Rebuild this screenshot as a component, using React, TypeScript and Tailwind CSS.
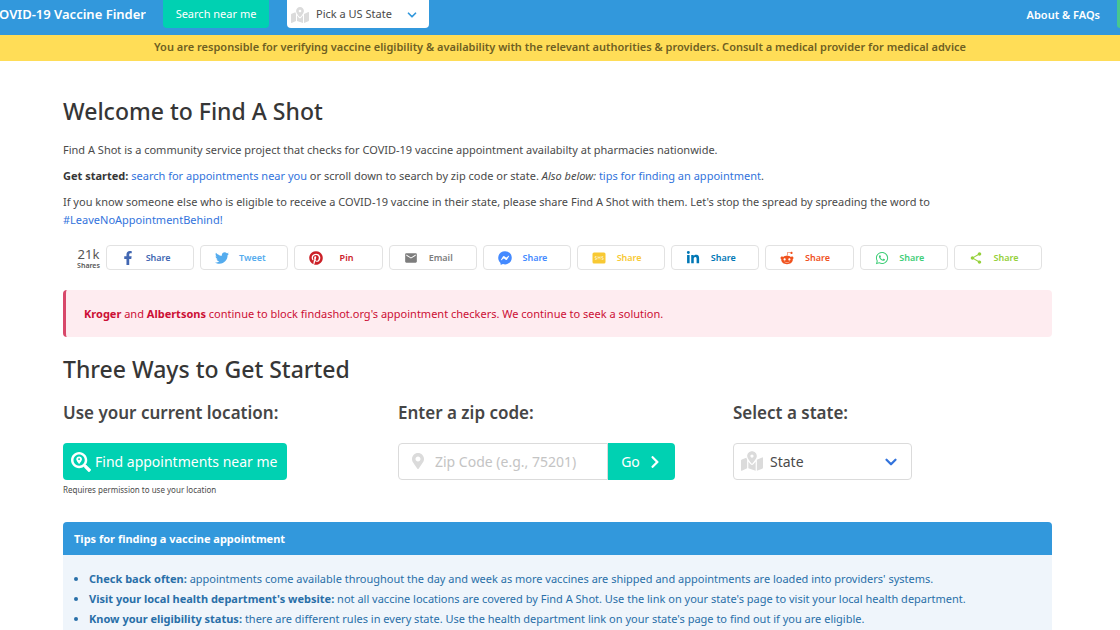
import type { ReactNode } from "react";
import type { IconType } from "react-icons";
import {
   FaChevronRight,
   FaFacebookF,
   FaFacebookMessenger,
   FaLinkedinIn,
   FaMapMarkedAlt,
   FaMapMarkerAlt,
   FaPinterest,
   FaRedditAlien,
   FaSearchLocation,
   FaTwitter,
   FaWhatsapp,
} from "react-icons/fa";
import { MdEmail, MdShare } from "react-icons/md";
import { FiChevronDown } from "react-icons/fi";

type ShareItem = { name: string; label: string; icon: IconType; color: string };

function SmsIcon({ className }: { className?: string }) {
   return (
      <svg viewBox="0 0 14 14" fill="currentColor" className={className}>
         <path d="M2 1.5h10a1.5 1.5 0 0 1 1.5 1.5v8a1.5 1.5 0 0 1-1.5 1.5H2A1.5 1.5 0 0 1 .5 11V3A1.5 1.5 0 0 1 2 1.5z" />
         <path
            d="M4.5 5.6H3V7h1.4v1.4H2.8M6 8.4V5.6l1 1.3 1-1.3v2.8M11.2 5.6H9.7V7h1.4v1.4H9.5"
            fill="none"
            stroke="#fff"
            strokeWidth=".7"
            strokeOpacity=".8"
         />
      </svg>
   );
}

const shares: ShareItem[] = [
   { name: "facebook", label: "Share", icon: FaFacebookF, color: "text-[#4267b2]" },
   { name: "twitter", label: "Tweet", icon: FaTwitter, color: "text-[#55acee]" },
   { name: "pinterest", label: "Pin", icon: FaPinterest, color: "text-[#cb2027]" },
   { name: "email", label: "Email", icon: MdEmail, color: "text-[#7d7d7d]" },
   { name: "messenger", label: "Share", icon: FaFacebookMessenger, color: "text-[#448aff]" },
   { name: "sms", label: "Share", icon: SmsIcon, color: "text-[#f8c933]" },
   { name: "linkedin", label: "Share", icon: FaLinkedinIn, color: "text-[#0077b5]" },
   { name: "reddit", label: "Share", icon: FaRedditAlien, color: "text-[#f0521e]" },
   { name: "whatsapp", label: "Share", icon: FaWhatsapp, color: "text-[#3fce78]" },
   { name: "sharethis", label: "Share", icon: MdShare, color: "text-[#95d03a]" },
];

const tips = [
   {
      title: "Check back often:",
      text: "appointments come available throughout the day and week as more vaccines are shipped and appointments are loaded into providers' systems.",
   },
   {
      title: "Visit your local health department's website:",
      text: "not all vaccine locations are covered by Find A Shot. Use the link on your state's page to visit your local health department.",
   },
   {
      title: "Know your eligibility status:",
      text: "there are different rules in every state. Use the health department link on your state's page to find out if you are eligible.",
   },
];

function Navbar() {
   return (
      <nav className="flex h-[35px] items-start bg-[#3298dc] text-white">
         <a href="#home" className="flex h-[30px] w-[146px] items-center justify-end overflow-hidden text-[13px] font-semibold whitespace-nowrap">
            COVID-19 Vaccine Finder
         </a>
         <button type="button" className="ml-[17px] h-7 w-[106px] rounded-b-sm bg-[#00d1b2] text-[11px]">
            Search near me
         </button>
         <div className="relative ml-[18px] text-[#4a4a4a]">
            <select
               aria-label="Pick a US State"
               className="h-7 w-[142px] appearance-none rounded-b-sm bg-white pl-[29px] text-[11px]"
            >
               <option>Pick a US State</option>
            </select>
            <FaMapMarkedAlt className="pointer-events-none absolute top-1.5 left-1 size-[18px] text-[#dbdbdb]" />
            <FiChevronDown className="pointer-events-none absolute top-2 right-2.5 size-3.5 stroke-3 text-[#3298dc]" />
         </div>
         <a href="#about" className="mr-[17px] ml-auto flex h-[30px] items-center text-[11px] font-semibold">
            About &amp; FAQs
         </a>
         <button type="button" aria-label="Donate" className="h-7 w-[3px] rounded-bl-sm bg-[#48c78e]" />
      </nav>
   );
}

function ShareBar() {
   return (
      <div className="mt-4 mr-2.5 ml-3.5 flex items-center gap-1.5">
         <div className="flex w-[23px] flex-col items-center text-[#555555]">
            <span className="text-[13px] leading-4">21k</span>
            <span className="text-[7px] leading-2 font-semibold">Shares</span>
         </div>
         {shares.map(({ name, label, icon: Icon, color }) => (
            <button
               key={name}
               type="button"
               aria-label={`${label} ${name}`}
               className={`flex h-[25px] flex-1 items-center rounded-sm border border-[#e2e2e2] pl-3.5 ${color}`}
            >
               <Icon className="size-3.5 shrink-0" />
               <span className="flex-1 pr-3 text-[9px] font-semibold">{label}</span>
            </button>
         ))}
      </div>
   );
}

function Way({ title, htmlFor, children }: { title: string; htmlFor: string; children: ReactNode }) {
   return (
      <div>
         <h3 className="mb-[18px] text-[17px] leading-6 font-semibold text-[#464646]">
            <label htmlFor={htmlFor}>{title}</label>
         </h3>
         {children}
      </div>
   );
}

function App() {
   return (
      <div className="flex min-h-screen flex-col bg-white font-['Noto_Sans','Open_Sans',sans-serif] text-[11px] text-[#4a4a4a]">
         <Navbar />
         <div className="h-[26px] bg-[#ffdd57] text-center text-[11px] leading-6 font-semibold text-[#6e5f22]">
            You are responsible for verifying vaccine eligibility &amp; availability with the relevant authorities &amp;
            providers. Consult a medical provider for medical advice
         </div>

         <main className="flex flex-1 flex-col pt-[34px] pr-[68px] pl-[63px]">
            <h1 className="text-[23px] leading-8 font-medium text-[#363636]">Welcome to Find A Shot</h1>
            <div className="mt-[14px] flex flex-col gap-2 leading-[18px]">
               <p>
                  Find A Shot is a community service project that checks for COVID-19 vaccine appointment availabilty at
                  pharmacies nationwide.
               </p>
               <p>
                  <strong className="font-bold text-[#363636]">Get started:</strong>{" "}
                  <a href="#near" className="text-[#3273dc]">search for appointments near you</a> or scroll down to
                  search by zip code or state. <em>Also below:</em>{" "}
                  <a href="#tips" className="text-[#3273dc]">tips for finding an appointment</a>.
               </p>
               <p>
                  If you know someone else who is eligible to receive a COVID-19 vaccine in their state, please share
                  Find A Shot with them. Let's stop the spread by spreading the word to
                  <br />
                  <a href="#tag" className="text-[#3273dc]">#LeaveNoAppointmentBehind!</a>
               </p>
            </div>

            <ShareBar />

            <div className="mt-5 rounded-sm border-l-3 border-[#d8486a] bg-[#feecf0] px-[18px] py-[14px] leading-[19px] text-[#cc0f35]">
               <strong className="font-bold">Kroger</strong> and{" "}
               <strong className="font-bold">Albertsons</strong> continue to block findashot.org's appointment
               checkers. We continue to seek a solution.
            </div>

            <h2 className="mt-4 text-[23px] leading-8 font-medium text-[#363636]">Three Ways to Get Started</h2>
            <div className="mt-4 grid grid-cols-3 gap-4">
               <Way title="Use your current location:" htmlFor="near">
                  <button
                     id="near"
                     type="button"
                     className="flex h-[37px] w-56 items-center gap-1 rounded-sm bg-[#00d1b2] pl-2 text-sm whitespace-nowrap text-white"
                  >
                     <FaSearchLocation className="size-5" />
                     Find appointments near me
                  </button>
                  <p className="mt-1 text-[8px] leading-3">Requires permission to use your location</p>
               </Way>
               <Way title="Enter a zip code:" htmlFor="zip">
                  <div className="relative flex">
                     <input
                        id="zip"
                        type="text"
                        placeholder="Zip Code (e.g., 75201)"
                        className="h-[37px] w-[210px] rounded-l-sm border border-[#dbdbdb] pl-9 text-sm placeholder:text-[#c4c4c4]"
                     />
                     <FaMapMarkerAlt className="pointer-events-none absolute top-2.5 left-3 size-4 text-[#dbdbdb]" />
                     <button
                        type="button"
                        className="flex h-[37px] w-[67px] items-center justify-center gap-2 rounded-r-sm bg-[#00d1b2] text-sm text-white"
                     >
                        Go <FaChevronRight className="size-3.5" />
                     </button>
                  </div>
               </Way>
               <Way title="Select a state:" htmlFor="state">
                  <div className="relative w-[179px]">
                     <select
                        id="state"
                        className="h-[37px] w-full appearance-none rounded-sm border border-[#dbdbdb] bg-white pl-9 text-sm text-[#4a4a4a]"
                     >
                        <option>State</option>
                     </select>
                     <FaMapMarkedAlt className="pointer-events-none absolute top-[7px] left-2 size-[22px] text-[#dbdbdb]" />
                     <FiChevronDown className="pointer-events-none absolute top-2.5 right-3 size-[18px] stroke-3 text-[#3273dc]" />
                  </div>
               </Way>
            </div>

            <section id="tips" className="mt-[26px] flex flex-1 flex-col rounded-t-sm bg-[#eff5fb] text-[#296fa8]">
               <h4 className="h-[33px] rounded-t-sm bg-[#3298dc] px-[11px] leading-[33px] font-bold text-white">
                  Tips for finding a vaccine appointment
               </h4>
               <ul className="list-disc pt-[14px] pl-[26px] leading-5">
                  {tips.map((tip) => (
                     <li key={tip.title}>
                        <strong className="font-bold">{tip.title}</strong> {tip.text}
                     </li>
                  ))}
               </ul>
            </section>
         </main>
      </div>
   );
}

export default App;
